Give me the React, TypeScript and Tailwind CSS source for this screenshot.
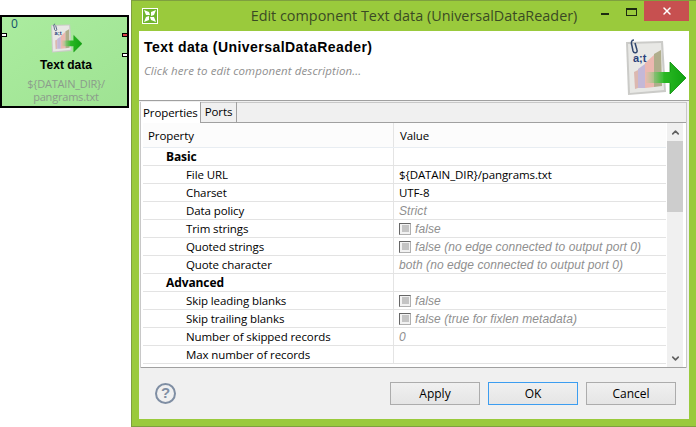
import React from 'react';
import { X, ChevronUp, ChevronDown } from 'lucide-react';

type Row = {
  name: string;
  value?: string;
  section?: boolean;
  check?: boolean;
  plain?: boolean;
};

const rows: Row[] = [
  { name: 'Basic', section: true },
  { name: 'File URL', value: '${DATAIN_DIR}/pangrams.txt', plain: true },
  { name: 'Charset', value: 'UTF-8', plain: true },
  { name: 'Data policy', value: 'Strict' },
  { name: 'Trim strings', value: 'false', check: true },
  { name: 'Quoted strings', value: 'false (no edge connected to output port 0)', check: true },
  { name: 'Quote character', value: 'both (no edge connected to output port 0)' },
  { name: 'Advanced', section: true },
  { name: 'Skip leading blanks', value: 'false', check: true },
  { name: 'Skip trailing blanks', value: 'false (true for fixlen metadata)', check: true },
  { name: 'Number of skipped records', value: '0' },
  { name: 'Max number of records' },
];

function ReaderIcon({ size }: { size: number }) {
  return (
    <svg width={size} height={size} viewBox="0 0 60 60" className="block">
      <defs>
        <linearGradient id={`arrow${size}`} x1="0" x2="1" y1="0" y2="0">
          <stop offset="0" stopColor="#8fdc8a" stopOpacity="0.1" />
          <stop offset="0.45" stopColor="#2ab824" />
          <stop offset="1" stopColor="#0fa30f" />
        </linearGradient>
      </defs>
      <path d="M0 4 L37 3 L40 54 L2 57 Z" fill="#cbcbc8" />
      <path d="M2 6 L35 5 L38 52 L4 55 Z" fill="#e8e8e5" />
      <path d="M8 34 L12 32 L12 50 L9 51 Z" fill="#dcb8b0" />
      <path d="M12 31 L19 26 L19 50 L12 50 Z" fill="#c4b8d8" />
      <path d="M19 25 L28 17 L28 49 L19 50 Z" fill="#ecb8b0" />
      <path d="M28 16 L35 12 L36 48 L28 49 Z" fill="#b0ae8c" />
      <path
        d="M8 2 C5 2 5 5 6 8 L7 13 C8 16 12 15 11 12 L9 5"
        fill="none"
        stroke="#31476f"
        strokeWidth="1.5"
      />
      <text x="7" y="24" fontSize="11" fontWeight="700" fill="#27407a" fontFamily="Liberation Sans, sans-serif">
        a;t
      </text>
      <path
        d="M20 34 L44 34 L44 24 L60 40 L44 56 L44 45 L20 45 Z"
        fill={`url(#arrow${size})`}
      />
      <path d="M44 34 L44 24 L60 40 L44 56 L44 45" fill="none" stroke="#0b8a0b" strokeWidth="0.8" />
    </svg>
  );
}

function Checkbox() {
  return (
    <span className="w-[12px] h-[12px] border border-[#b0b0b0] border-t-[#666666] border-l-[#666666] bg-[#f2f2f2] flex items-center justify-center shrink-0">
      <span className="w-[7px] h-[7px] bg-[#c4c4c4]" />
    </span>
  );
}

function Port({ className }: { className: string }) {
  return <span className={`absolute w-[6px] h-[4px] border border-black ${className}`} />;
}

function Node() {
  return (
    <div className="relative mt-[15px] w-[129px] h-[93px] border-2 border-black bg-gradient-to-br from-[#abec9f] to-[#9fe393] flex flex-col items-center pl-[3px] shrink-0">
      <span className="absolute left-[9px] top-[-1px] text-[12px] leading-[16px] text-[#14506b]">0</span>
      <Port className="left-[-1px] top-[16px] bg-white" />
      <Port className="right-[-1px] top-[16px] bg-[#d9414a]" />
      <Port className="right-[-1px] top-[36px] bg-white" />
      <div className="mt-[6px]">
        <ReaderIcon size={31} />
      </div>
      <div className="mt-[4px] font-['Liberation_Sans',sans-serif] font-bold text-[12px] leading-[14px] text-black">Text data</div>
      <div className="mt-[5px] text-center text-[11px] tracking-[-0.2px] leading-[13px] text-[#8c9c8c]">
        {'${DATAIN_DIR}/'}
        <br />
        pangrams.txt
      </div>
    </div>
  );
}

function Button({ label, focus }: { label: string; focus?: boolean }) {
  return (
    <button
      className={`w-[90px] h-[23px] border bg-gradient-to-b from-[#f0f0f0] to-[#e5e5e5] text-[12px] leading-none text-black ${
        focus ? 'border-[#3c9df0]' : 'border-[#acacac]'
      }`}
    >
      {label}
    </button>
  );
}

function Dialog() {
  return (
    <div className="ml-[2px] w-[565px] h-[427px] bg-[#9aca3c] border border-[#7f9f3f] border-r-0 flex flex-col shrink-0">
      <div className="h-[30px] flex items-start shrink-0">
        <div className="flex-1">
          <div className="ml-[10px] mt-[7px] w-[16px] h-[16px] border border-white bg-[#6fb52f] flex items-center justify-center">
            <svg width="14" height="14" viewBox="0 0 14 14">
              <path d="M1 1 L6 3 L7 6 L3 6 Z M13 1 L11 6 L8 7 L8 3 Z M13 13 L8 11 L7 8 L11 8 Z M1 13 L3 8 L6 7 L6 11 Z" fill="#fff" />
            </svg>
          </div>
        </div>
        <div className="text-center text-[14.4px] leading-[30px] text-[#3a4a24]">
          Edit component Text data (UniversalDataReader)
        </div>
        <div className="flex-1 flex items-start justify-end">
          <span className="mt-[12px] mr-[17px] w-[8px] h-[2px] bg-[#1d2a10]" />
          <span className="mt-[7px] mr-[7px] w-[11px] h-[8px] border border-[#1d2a10] border-t-2" />
          <div className="w-[45px] h-[20px] bg-[#c75050] flex items-center justify-center mr-[7px]">
            <X size={12} strokeWidth={3} className="text-white" />
          </div>
        </div>
      </div>

      <div className="mx-[7px] flex-1 min-h-0 flex flex-col bg-[#f0f0f0]">
        <div className="h-[70px] bg-white flex justify-between shrink-0 border-b border-[#a0a0a0]">
          <div className="pl-[5px]">
            <div className="mt-[8px] font-['Liberation_Sans',sans-serif] font-bold text-[14px] leading-[16px] tracking-[0.45px] text-black">
              Text data (UniversalDataReader)
            </div>
            <div className="mt-[8px] italic text-[11.5px] tracking-[0.1px] leading-[16px] text-[#8f8f8f]">
              Click here to edit component description...
            </div>
          </div>
          <div className="mt-[7px] mr-[3px]">
            <ReaderIcon size={60} />
          </div>
        </div>

        <div className="flex-1 min-h-0 flex flex-col ml-[1px] mr-[2px] mt-[1px] border border-[#c8c8c8] border-b-0 bg-[#f0f0f0] text-[11.5px] tracking-[-0.1px]">
          <div className="h-[20px] flex items-end shrink-0 border-b border-[#a0a0a0]">
            <div className="h-[21px] px-[2px] bg-white border-r border-[#a0a0a0] leading-[21px] text-black -mb-px">Properties</div>
            <div className="h-[20px] px-[4px] border-r border-[#a0a0a0] leading-[20px] text-black">Ports</div>
          </div>

          <div className="flex-1 min-h-0 flex bg-white pl-[2px] pr-[3px] border-b border-[#a0a0a0]">
            <div className="flex-1 min-w-0 overflow-hidden">
              <div className="h-[25px] flex border-b border-[#e8edf2] bg-[#fcfcfc] leading-[25px] text-black">
                <div className="w-[251px] pl-[5px] border-r border-[#e4e4e4]">Property</div>
                <div className="pl-[6px]">Value</div>
              </div>
              {rows.map((row) => (
                <div key={row.name} className="h-[18px] flex border-b border-[#e3e3e3] leading-[17px]">
                  <div
                    className={`w-[251px] border-r border-[#e4e4e4] text-black ${
                      row.section ? 'pl-[23px] font-bold text-[12px]' : 'pl-[43px]'
                    }`}
                  >
                    {row.name}
                  </div>
                  <div className="flex-1 pl-[5px] flex items-center gap-[4px]">
                    {row.check && <Checkbox />}
                    {row.value &&
                      (row.plain ? (
                        <span className="text-black">{row.value}</span>
                      ) : (
                        <span className="pt-[1px] font-['Liberation_Sans',sans-serif] italic text-[12px] tracking-[0.08px] text-[#8f8f8f]">{row.value}</span>
                      ))}
                  </div>
                </div>
              ))}
            </div>
            <div className="w-[16px] ml-[1px] bg-[#f0f0f0] flex flex-col items-center justify-between shrink-0">
              <div className="w-full">
                <div className="h-[18px] flex items-center justify-center">
                  <ChevronUp size={11} strokeWidth={3.5} className="text-[#606060]" />
                </div>
                <div className="h-[71px] bg-[#cdcdcd]" />
              </div>
              <div className="h-[18px] flex items-center justify-center">
                <ChevronDown size={11} strokeWidth={3.5} className="text-[#606060]" />
              </div>
            </div>
          </div>
        </div>

        <div className="h-[51px] bg-[#f0f0f0] flex items-center justify-between shrink-0 pl-[16px] pr-[13px]">
          <div className="w-[21px] h-[21px] rounded-full border-2 border-[#7f8ea3] flex items-center justify-center font-['Liberation_Sans',sans-serif] font-bold text-[15px] text-[#7f8ea3]">
            ?
          </div>
          <div className="flex gap-[8px]">
            <Button label="Apply" />
            <Button label="OK" focus />
            <Button label="Cancel" />
          </div>
        </div>
      </div>
      <div className="h-[7px] shrink-0" />
    </div>
  );
}

export default function App() {
  return (
    <div className="w-[696px] h-[427px] bg-white flex items-start overflow-hidden font-['Open_Sans',sans-serif]">
      <Node />
      <Dialog />
    </div>
  );
}
